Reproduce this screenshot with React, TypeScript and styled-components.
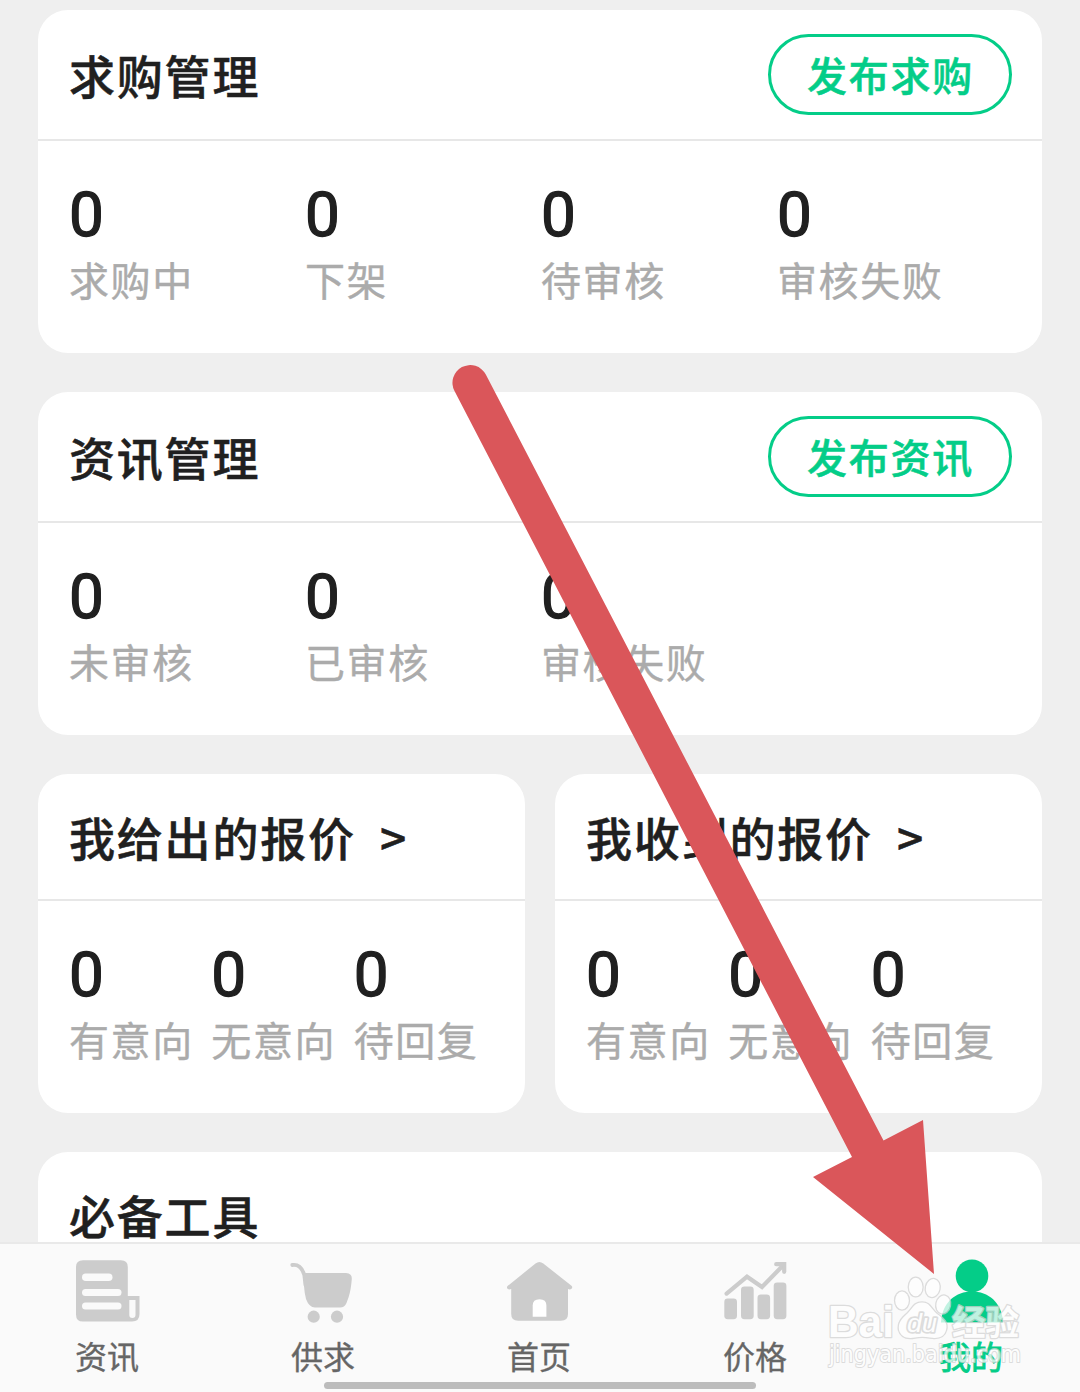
import React from "react";
import styled, { createGlobalStyle } from "styled-components";

const GREEN = "#04cd88";
const GREY = "#cccccc";

const GlobalStyle = createGlobalStyle`
  * { box-sizing: border-box; }
  body {
    margin: 0;
    background: #efefef;
    font-family: "Noto Sans CJK SC", "Noto Sans", sans-serif;
  }
`;

const Screen = styled.div`
  position: relative;
  display: flex;
  flex-direction: column;
  width: 1080px;
  height: 1392px;
  overflow: hidden;
  background: #efefef;
`;

const Content = styled.main`
  flex: 1;
  min-height: 0;
  overflow: hidden;
  display: flex;
  flex-direction: column;
  gap: 39px;
  padding: 10px 38px 0;
`;

const CardRow = styled.div`
  display: grid;
  grid-template-columns: 1fr 1fr;
  gap: 30px;
  flex-shrink: 0;
`;

const Card = styled.section<{ $height: number }>`
  flex-shrink: 0;
  height: ${(p) => p.$height}px;
  border-radius: 30px;
  background: #fff;
`;

const CardHeader = styled.header<{ $height: number }>`
  display: flex;
  align-items: center;
  justify-content: space-between;
  height: ${(p) => p.$height}px;
  padding: 0 30px 0 31px;
  border-bottom: 2px solid #e7e7e7;
`;

const Title = styled.h2`
  margin: 0;
  padding-bottom: 1px;
  font-size: 46px;
  font-weight: 500;
  line-height: 60px;
  letter-spacing: 1.8px;
  word-spacing: 12px;
  color: #202020;
  -webkit-text-stroke: 0.5px #202020;
  white-space: pre;
`;

const PillButton = styled.button`
  width: 244px;
  height: 81px;
  padding: 0 0 2px 1px;
  border: 3px solid ${GREEN};
  border-radius: 41px;
  background: #fff;
  color: ${GREEN};
  font-family: inherit;
  font-size: 40px;
  font-weight: 500;
  line-height: 70px;
  letter-spacing: 1.7px;
  -webkit-text-stroke: 0.5px ${GREEN};
`;

const Stats = styled.div<{ $columns: number }>`
  display: grid;
  grid-template-columns: repeat(${(p) => p.$columns}, 1fr);
  padding: 38px 30px 0;
`;

const Stat = styled.div`
  display: flex;
  flex-direction: column;
  white-space: nowrap;
`;

const Count = styled.span`
  font-family: Roboto, sans-serif;
  font-size: 62px;
  font-weight: 400;
  line-height: 72px;
  color: #202020;
  padding-left: 1px;
  -webkit-text-stroke: 1.3px #202020;
`;

const Label = styled.span`
  padding-left: 1px;
  margin-top: -3px;
  font-size: 40px;
  line-height: 62px;
  letter-spacing: 1.6px;
  color: #ababab;
  -webkit-text-stroke: 0.4px #ababab;
`;

const TabBar = styled.nav`
  display: grid;
  grid-template-columns: repeat(5, 1fr);
  flex-shrink: 0;
  height: 150px;
  padding-top: 14px;
  border-top: 2px solid #e9e9e9;
  background: #fafafa;
`;

const Tab = styled.div<{ $active?: boolean }>`
  display: flex;
  flex-direction: column;
  align-items: center;
  color: ${(p) => (p.$active ? GREEN : "#666")};
  font-size: 32px;
  line-height: 40px;
  gap: 11px;
`;

const TabLabel = styled.span<{ $active?: boolean }>`
  padding-right: 2px;
  -webkit-text-stroke: ${(p) => (p.$active ? 0.9 : 0.3)}px currentColor;
`;

const HomeIndicator = styled.div`
  position: absolute;
  left: 324px;
  bottom: 3px;
  width: 432px;
  height: 7px;
  border-radius: 4px;
  background: #bcbcbc;
`;

const Overlay = styled.svg`
  position: absolute;
  inset: 0;
  pointer-events: none;
`;

const NewsIcon = () => (
  <svg width="72" height="66" viewBox="0 0 72 66">
    <path
      fill={GREY}
      fillRule="evenodd"
      d="M11 2.3H49Q55.8 2.3 55.8 9V38H67.5V56Q67.5 63.6 60 63.6H11Q4 63.6 4 56.5V9Q4 2.3 11 2.3Z
      M57.3 42V57Q57.3 60 60.3 60Q63.5 60 63.5 57V42Z"
    />
    <rect x="10" y="15.5" width="30.5" height="7.5" rx="3.75" fill="#fafafa" />
    <rect x="10" y="31" width="39.5" height="7" rx="3.5" fill="#fafafa" />
    <rect x="10" y="44.6" width="39.5" height="7" rx="3.5" fill="#fafafa" />
  </svg>
);

const CartIcon = () => (
  <svg width="72" height="66" viewBox="0 0 72 66" fill={GREY}>
    <path d="M4.3 7C11 6 14.5 11 16.3 17L17.5 27" fill="none" stroke={GREY} strokeWidth="3.8" strokeLinecap="round" />
    <path d="M15 15H58Q64.2 15.5 63.8 21C63 31 61.5 38 58.5 45Q56.5 49.6 52 49.6H27Q21 49.3 18 41C15.8 33 16 24 15 15Z" />
    <circle cx="25.7" cy="58.7" r="6.1" />
    <circle cx="49" cy="58.7" r="6.1" />
  </svg>
);

const HouseIcon = () => (
  <svg width="72" height="66" viewBox="0 0 72 66" fill={GREY}>
    <path d="M31.5 5.5Q35.4 2.5 39.3 5.5L67.5 27.8Q69 29.3 67.5 30.8Q66 32 64 31V56Q64 62.8 57 62.8H14Q7.2 62.8 7.2 56V31Q5 32 3.6 30.8Q2.2 29.3 3.8 27.8Z" />
    <path fill="#fff" d="M28.7 58.7H42.4V47.5Q42.4 41.2 35.5 41.2Q28.7 41.2 28.7 47.5Z" />
  </svg>
);

const ChartIcon = () => (
  <svg width="72" height="66" viewBox="0 0 72 66" fill={GREY}>
    <rect x="4.3" y="40.6" width="12.7" height="20.6" rx="3.4" />
    <rect x="21" y="28.6" width="12.7" height="32.6" rx="3.4" />
    <rect x="37.5" y="36.6" width="12.6" height="24.6" rx="3.4" />
    <rect x="53.7" y="24.6" width="12.7" height="36.6" rx="3.4" />
    <g fill="none" stroke={GREY} strokeWidth="4.2" strokeLinecap="round">
      <path d="M6.6 35.6L27 18.7L42 29L62.5 8" />
      <path d="M56.2 6.2H64.2V13.8" />
    </g>
  </svg>
);

const PersonIcon = () => (
  <svg width="72" height="66" viewBox="0 0 72 66" fill={GREEN}>
    <circle cx="36" cy="17.9" r="16.3" />
    <path d="M5 64.4C6 44 20 33.4 36 33.4S66 44 67 64.4Z" />
  </svg>
);

const WATERMARK = {
  fill: "#ffffff",
  stroke: "#d2d2d2",
  strokeWidth: 2.6,
  strokeLinejoin: "round" as const,
  paintOrder: "stroke",
  opacity: 0.75,
};

const Watermark = () => (
  <g {...WATERMARK}>
    <text x="828" y="1336.5" fontFamily="Liberation Sans" fontSize="44" fontWeight="700" textLength="66" lengthAdjust="spacingAndGlyphs">
      Bai
    </text>
    <path d="M922 1302.5C930 1302.5 931 1309 937 1314C944 1319 948 1323 946 1330C944 1338 937 1338.5 930 1337.5Q922 1336 915 1337.5C907 1339 901 1337 899 1330C898 1323 901 1319 908 1313C913 1308 914 1302.5 922 1302.5Z" />
    <ellipse cx="902" cy="1300.5" rx="6.8" ry="9" />
    <ellipse cx="915.7" cy="1287" rx="6.8" ry="9.2" />
    <ellipse cx="932.7" cy="1288" rx="6.8" ry="9" transform="rotate(12 932.7 1288)" />
    <ellipse cx="943.2" cy="1304.5" rx="6.8" ry="9" transform="rotate(12 943.2 1304.5)" />
    <text x="907" y="1332" fontFamily="Liberation Sans" fontSize="26" fontStyle="italic" strokeWidth="3.4" textLength="30" lengthAdjust="spacingAndGlyphs">
      du
    </text>
    <text x="952" y="1334.5" fontFamily="Noto Sans CJK SC" fontSize="34" fontWeight="700" textLength="67" lengthAdjust="spacingAndGlyphs">
      经验
    </text>
    <text x="829" y="1362" fontFamily="DejaVu Sans" fontSize="22.5" strokeWidth="2" textLength="192" lengthAdjust="spacingAndGlyphs">
      jingyan.baidu.com
    </text>
  </g>
);

type StatsCardProps = {
  title: string;
  labels: string[];
  columns: number;
  height: number;
  headerHeight: number;
  action?: string;
};

const StatsCard = ({ title, labels, columns, height, headerHeight, action }: StatsCardProps) => (
  <Card $height={height}>
    <CardHeader $height={headerHeight}>
      <Title>{title}</Title>
      {action && <PillButton>{action}</PillButton>}
    </CardHeader>
    <Stats $columns={columns}>
      {labels.map((label) => (
        <Stat key={label}>
          <Count>0</Count>
          <Label>{label}</Label>
        </Stat>
      ))}
    </Stats>
  </Card>
);

const TABS = [
  { label: "资讯", Icon: NewsIcon },
  { label: "供求", Icon: CartIcon },
  { label: "首页", Icon: HouseIcon },
  { label: "价格", Icon: ChartIcon },
  { label: "我的", Icon: PersonIcon, active: true },
];

export default function App() {
  return (
    <>
      <GlobalStyle />
      <Screen>
        <Content>
          <StatsCard
            title="求购管理"
            action="发布求购"
            columns={4}
            height={343}
            headerHeight={131}
            labels={["求购中", "下架", "待审核", "审核失败"]}
          />
          <StatsCard
            title="资讯管理"
            action="发布资讯"
            columns={4}
            height={343}
            headerHeight={131}
            labels={["未审核", "已审核", "审核失败"]}
          />
          <CardRow>
            <StatsCard
              title="我给出的报价 &gt;"
              columns={3}
              height={339}
              headerHeight={127}
              labels={["有意向", "无意向", "待回复"]}
            />
            <StatsCard
              title="我收到的报价 &gt;"
              columns={3}
              height={339}
              headerHeight={127}
              labels={["有意向", "无意向", "待回复"]}
            />
          </CardRow>
          <Card $height={300}>
            <CardHeader $height={127}>
              <Title>必备工具</Title>
            </CardHeader>
          </Card>
        </Content>
        <TabBar>
          {TABS.map(({ label, Icon, active }) => (
            <Tab key={label} $active={active}>
              <Icon />
              <TabLabel $active={active}>{label}</TabLabel>
            </Tab>
          ))}
        </TabBar>
        <HomeIndicator />
        <Overlay width="1080" height="1392" viewBox="0 0 1080 1392">
          <path
            fill="#da565a"
            d="M454.5 391A17.6 17.6 0 0 1 485.8 374.5L883.5 1140.5L923 1120L934 1274L813 1177L852 1157Z"
          />
          <Watermark />
        </Overlay>
      </Screen>
    </>
  );
}
